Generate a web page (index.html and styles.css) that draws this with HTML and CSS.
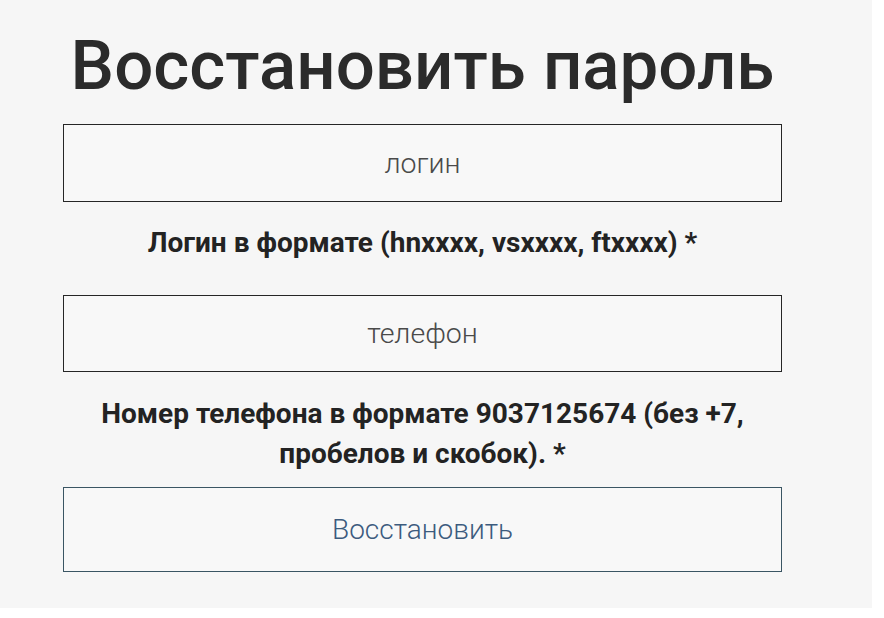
FILE: index.html
```html
<!DOCTYPE html>
<html lang="ru">
<head>
    <meta charset="UTF-8">
    <meta name="viewport" content="width=device-width, initial-scale=1.0">
    <title>Восстановить пароль</title>
    <link rel="stylesheet" href="styles.css">
</head>
<body>

    <!-- Форма восстановления -->
    <div class="restore-page">
        <form class="restore-form" onsubmit="return false;">
            <h1>Восстановить пароль</h1>
            <input type="text" class="field field-login" placeholder="логин">
            <p class="hint hint-login">Логин в формате (hnxxxx, vsxxxx, ftxxxx) *</p>
            <input type="text" class="field field-phone" placeholder="телефон">
            <p class="hint hint-phone">Номер телефона в формате 9037125674 (без +7,<br>пробелов и скобок). *</p>
            <button type="submit" class="restore-btn">Восстановить</button>
        </form>
    </div>

</body>
</html>
```

FILE: styles.css
```css
body {
    margin: 0;
    padding: 0;
    background-color: #fff;
    font-family: Roboto, "Liberation Sans", sans-serif;
}
.restore-page {
    width: 872px;
    height: 608px;
    background-color: #f6f6f6;
    box-sizing: border-box;
    padding: 26px 0 0 63px;
}
.restore-form {
    width: 719px;
    display: flex;
    flex-direction: column;
    align-items: stretch;
}
.restore-form h1 {
    margin: 0 0 18px;
    font-size: 69px;
    line-height: 80px;
    font-weight: 500;
    color: #2b2b2b;
    text-align: center;
}
.field {
    box-sizing: border-box;
    height: 78px;
    margin: 0;
    padding: 0 10px;
    border: 1px solid #262626;
    background-color: #f8f8f8;
    font-family: inherit;
    font-size: 28.5px;
    font-weight: 300;
    color: #444;
    text-align: center;
    outline: none;
}
.field::placeholder {
    color: #4a4a4a;
}
.field-phone {
    height: 77px;
}
.hint {
    margin: 21px 0 32px;
    font-size: 28px;
    line-height: 40px;
    font-weight: 700;
    color: #232323;
    text-align: center;
}
.hint-phone {
    margin: 22px 0 13px;
}
.restore-btn {
    box-sizing: border-box;
    height: 85px;
    border: 1px solid #3a5563;
    background-color: #f8f8f8;
    font-family: inherit;
    font-size: 28px;
    font-weight: 300;
    color: #3c5b7e;
    cursor: pointer;
}
```
